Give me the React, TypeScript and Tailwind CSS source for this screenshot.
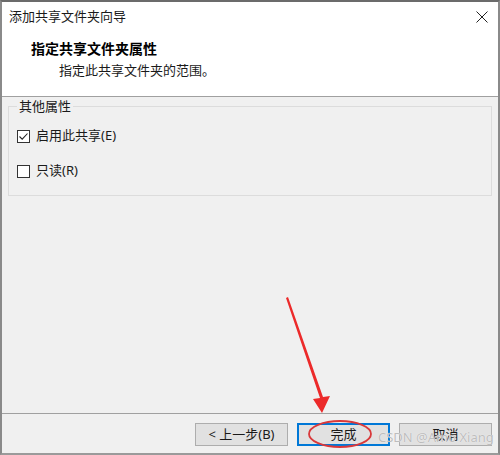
const FONT = "font-['Noto_Sans','Noto_Sans_CJK_SC',sans-serif]";

function Checkbox({ checked, label }: { checked: boolean; label: string }) {
  return (
    <label className="flex h-[18px] items-center gap-[6px] text-[13px] text-[#1a1a1a]">
      <span className="flex h-[13px] w-[13px] items-center justify-center border border-[#333] bg-white">
        {checked && (
          <svg width="11" height="11" viewBox="0 0 11 11">
            <path d="M1.5 5.5 L4.2 8.2 L9.5 2.5" fill="none" stroke="#222" strokeWidth="1.1" />
          </svg>
        )}
      </span>
      <span>{label}</span>
    </label>
  );
}

function Button({ label, primary }: { label: string; primary?: boolean }) {
  return (
    <button
      className={
        "h-[23px] w-[93px] bg-[#e1e1e1] text-[13px] leading-none text-[#1a1a1a] " +
        (primary ? "border-2 border-[#0078d7]" : "border border-[#adadad]")
      }
    >
      {label}
    </button>
  );
}

export default function App() {
  return (
    <div className={`relative flex h-[455px] w-[500px] flex-col overflow-hidden border-x-2 border-t-2 border-b-[2px] border-x-[#8a8a8a] border-t-[#6b6b6b] border-b-[#9a9a9a] bg-[#f0f0f0] ${FONT}`}>
      {/* title + header */}
      <div className="flex h-[95px] flex-col border-b border-[#a0a0a0] bg-white">
        <div className="flex h-[30px] items-center justify-between pl-[7px] pr-[10px]">
          <span className="text-[13px] text-[#1a1a1a]">添加共享文件夹向导</span>
          <svg width="12" height="12" viewBox="0 0 12 12">
            <path d="M0.5 0.5 L11.5 11.5 M11.5 0.5 L0.5 11.5" stroke="#222" strokeWidth="1" />
          </svg>
        </div>
        <div className="pl-[29px] pt-[6px] text-[14px] font-bold text-black">指定共享文件夹属性</div>
        <div className="pl-[57px] pt-[2px] text-[13px] text-[#1a1a1a]">指定此共享文件夹的范围。</div>
      </div>

      {/* body */}
      <div className="flex-1 px-[6px] pt-[2px]">
        <fieldset className="h-[97px] border border-[#dcdcdc] px-[8px] pb-0">
          <legend className="px-[2px] text-[13px] leading-[14px] text-[#1a1a1a]">其他属性</legend>
          <div className="flex flex-col gap-[17px] pt-[14px]">
            <Checkbox checked label="启用此共享(E)" />
            <Checkbox checked={false} label="只读(R)" />
          </div>
        </fieldset>
      </div>

      {/* footer */}
      <div className="flex h-[40px] items-start justify-end gap-[9px] border-t border-[#a0a0a0] pr-[6px] pt-[9px]">
        <Button label="< 上一步(B)" />
        <Button label="完成" primary />
        <Button label="取消" />
      </div>

      {/* annotation overlay */}
      <svg className="pointer-events-none absolute left-[-2px] top-[-2px]" width="500" height="455" viewBox="0 0 500 455">
        <polygon points="286,298 320,398 313,399 322,413 330,396 323,397 288,297" fill="#ec2a2a" />
        <ellipse cx="340" cy="434" rx="31" ry="13" fill="none" stroke="#d9383a" strokeWidth="1.8" />
      </svg>
      <span className="pointer-events-none absolute left-[376px] top-[426px] text-[13px] text-[#bdbdbd] [text-shadow:0_0_1px_#fff]">
        CSDN @Amo Xiang
      </span>
    </div>
  );
}
